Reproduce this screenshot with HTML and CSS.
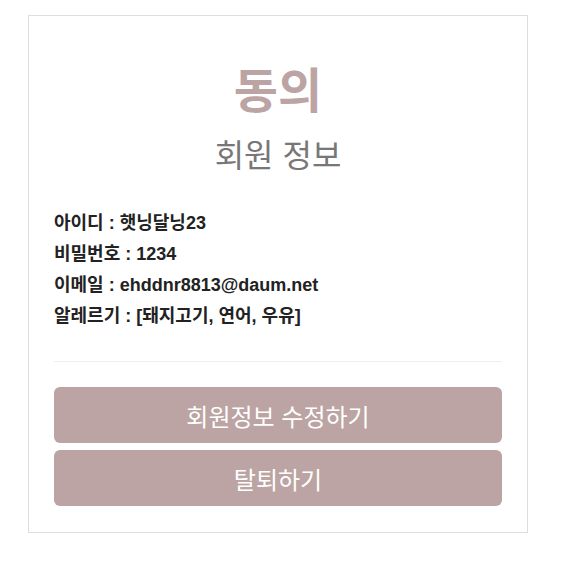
FILE: index.html
```html
<!DOCTYPE html>
<html lang="ko">
<head>
<meta charset="utf-8">
<link rel="stylesheet" href="styles.css">
</head>
<body>
<div class="page">
  <div class="card">
    <h1 class="title">동의</h1>
    <h2 class="subtitle">회원 정보</h2>
    <div class="info">
      <p class="row">아이디 : 햇닝달닝23</p>
      <p class="row">비밀번호 : 1234</p>
      <p class="row">이메일 : ehddnr8813@daum.net</p>
      <p class="row">알레르기 : [돼지고기, 연어, 우유]</p>
    </div>
    <hr class="divider">
    <div class="actions">
      <button class="btn">회원정보 수정하기</button>
      <button class="btn">탈퇴하기</button>
    </div>
  </div>
</div>
</body>
</html>
```

FILE: styles.css
```css
html, body {
  margin: 0;
  padding: 0;
  background: #ffffff;
}
body {
  font-family: "Liberation Sans", "Noto Sans CJK KR", sans-serif;
}
.page {
  padding: 15px 0 0 28px;
}
.card {
  box-sizing: border-box;
  width: 500px;
  height: 518px;
  border: 1px solid #dddddd;
  padding: 0 25px;
  display: flex;
  flex-direction: column;
}
.title {
  margin: 48px 0 0;
  text-align: center;
  font-size: 48px;
  line-height: 56px;
  font-weight: 700;
  color: #bca4a4;
}
.subtitle {
  margin: 17px 0 0;
  text-align: center;
  font-size: 32px;
  line-height: 38px;
  font-weight: 400;
  color: #777777;
}
.info {
  margin-top: 33px;
  display: flex;
  flex-direction: column;
}
.row {
  margin: 0;
  font-size: 18px;
  line-height: 31px;
  font-weight: 700;
  color: #222222;
}
.divider {
  margin: 29px 0 0;
  border: 0;
  border-top: 1px solid #eeeeee;
  height: 0;
}
.actions {
  margin-top: 25px;
  display: flex;
  flex-direction: column;
  gap: 7px;
}
.btn {
  height: 56px;
  border: 0;
  border-radius: 6px;
  background: #bba4a3;
  color: #ffffff;
  font-family: "Liberation Sans", "Noto Sans CJK KR", sans-serif;
  font-size: 24px;
  padding: 0;
}
```
